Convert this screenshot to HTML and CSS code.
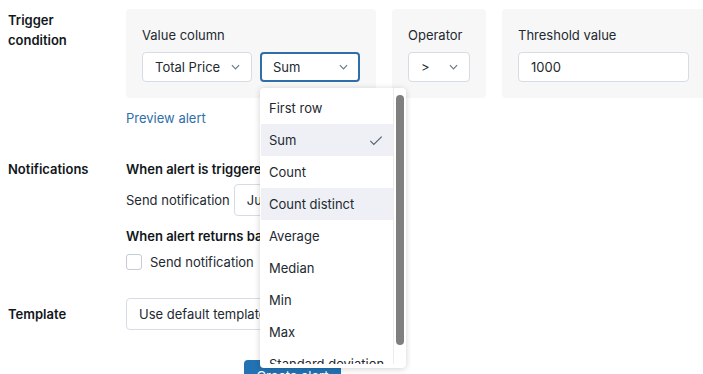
FILE: index.html
```html
<!DOCTYPE html>
<html>
<head>
<meta charset="utf-8">
<link rel="stylesheet" href="styles.css">
</head>
<body>
<div class="page">
  <div class="row row-trigger">
    <div class="label">Trigger condition</div>
    <div class="content">
      <div class="cards">
        <div class="card card-value">
          <div class="field-label">Value column</div>
          <div class="select-group">
            <div class="select w-total"><span>Total Price</span><svg class="chev" viewBox="0 0 10 6"><polyline points="1,1 5,5 9,1"/></svg></div>
            <div class="select w-sum focused"><span>Sum</span><svg class="chev" viewBox="0 0 10 6"><polyline points="1,1 5,5 9,1"/></svg></div>
          </div>
        </div>
        <div class="card card-op">
          <div class="field-label">Operator</div>
          <div class="select w-op"><span>&gt;</span><svg class="chev" viewBox="0 0 10 6"><polyline points="1,1 5,5 9,1"/></svg></div>
        </div>
        <div class="card card-threshold">
          <div class="field-label">Threshold value</div>
          <div class="input w-threshold">1000</div>
        </div>
      </div>
      <a class="link">Preview alert</a>
    </div>
  </div>

  <div class="row row-notify">
    <div class="label">Notifications</div>
    <div class="content">
      <div class="subhead">When alert is triggered</div>
      <div class="inline">
        <span>Send notification</span>
        <div class="select w-once"><span>Just once</span><svg class="chev" viewBox="0 0 10 6"><polyline points="1,1 5,5 9,1"/></svg></div>
      </div>
      <div class="subhead second">When alert returns back to normal</div>
      <label class="check"><span class="box"></span><span>Send notification</span></label>
    </div>
  </div>

  <div class="row row-template">
    <div class="label">Template</div>
    <div class="content">
      <div class="select w-template"><span>Use default template</span><svg class="chev" viewBox="0 0 10 6"><polyline points="1,1 5,5 9,1"/></svg></div>
    </div>
  </div>

  <div class="actions">
    <button class="primary">Create alert</button>
  </div>

  <div class="dropdown">
    <ul class="options">
      <li>First row</li>
      <li class="hl">Sum<svg class="check-icon" viewBox="0 0 16 12"><polyline points="1.5,6.5 5.5,10.5 14.5,1.5"/></svg></li>
      <li>Count</li>
      <li class="hl">Count distinct</li>
      <li>Average</li>
      <li>Median</li>
      <li>Min</li>
      <li>Max</li>
      <li>Standard deviation</li>
    </ul>
    <div class="track"><div class="thumb"></div></div>
  </div>
</div>
</body>
</html>
```

FILE: styles.css
```css
html, body {
  margin: 0;
  padding: 0;
  background: #ffffff;
  overflow: hidden;
}
body {
  font-family: Inter, "Noto Sans", "Liberation Sans", sans-serif;
  font-size: 13px;
  line-height: 20px;
  color: #22292f;
  width: 703px;
  height: 374px;
}
.page {
  position: relative;
  padding: 9px 0 0 8px;
  height: 374px;
  box-sizing: border-box;
}
.row {
  display: flex;
}
.label {
  width: 94px;
  flex: none;
  margin-right: 24px;
  font-weight: 600;
  color: #11171c;
}
.row-trigger .label {
  padding-top: 1px;
}
.content {
  display: flex;
  flex-direction: column;
  align-items: flex-start;
}
.cards {
  display: flex;
  gap: 16px;
}
.card {
  background: #f8f7f7;
  border-radius: 4px;
  padding: 16px;
  display: flex;
  flex-direction: column;
  gap: 7px;
}
.card-threshold {
  width: 171px;
}
.select-group {
  display: flex;
  gap: 8px;
}
.select, .input {
  box-sizing: border-box;
  height: 30px;
  border: 1px solid #d5dce3;
  border-radius: 4px;
  background: #ffffff;
  display: flex;
  align-items: center;
  justify-content: space-between;
  padding: 0 11px 0 12px;
}
.select.focused {
  border: 2px solid #2f6ea9;
  padding: 0 10px 0 11px;
}
.chev {
  width: 9px;
  height: 6px;
  fill: none;
  stroke: #6b7a87;
  stroke-width: 1.3;
}
.w-total { width: 110px; }
.w-sum { width: 100px; }
.w-op { width: 62px; }
.w-threshold { width: 171px; }
.w-once { width: 140px; height: 32px; }
.w-template { width: 180px; height: 32px; }
.link {
  margin-top: 10px;
  color: #2f6ea9;
  text-decoration: none;
}
.row-notify {
  margin-top: 31px;
}
.subhead {
  font-weight: 600;
  color: #11171c;
}
.subhead.second {
  margin-top: 10px;
}
.inline {
  display: flex;
  align-items: center;
  gap: 4px;
  margin-top: 5px;
}
.check {
  display: flex;
  align-items: center;
  gap: 8px;
  margin-top: 6px;
}
.box {
  width: 14px;
  height: 14px;
  border: 1px solid #c3cbd3;
  border-radius: 3px;
  background: #fff;
}
.row-template {
  margin-top: 26px;
}
.row-template .label {
  padding-top: 6px;
}
.actions {
  margin-top: 30px;
  padding-left: 236px;
}
.primary {
  font: inherit;
  width: 97px;
  height: 32px;
  border: none;
  border-radius: 4px;
  background: #2272b4;
  color: #ffffff;
  padding: 0;
  line-height: 32px;
}
.dropdown {
  position: absolute;
  left: 260px;
  top: 88px;
  width: 146px;
  height: 280px;
  padding-bottom: 4px;
  box-sizing: border-box;
  background: #ffffff;
  border-radius: 4px;
  box-shadow: 0 1px 6px rgba(0, 0, 0, 0.18);
  display: flex;
  z-index: 10;
}
.options {
  list-style: none;
  margin: 0;
  padding: 4px 0 0 1px;
  flex: 1;
  overflow: hidden;
}
.options li {
  height: 32px;
  display: flex;
  align-items: center;
  justify-content: space-between;
  padding: 0 10px 0 8px;
  white-space: nowrap;
}
.options li.hl {
  background: #eef0f6;
}
.check-icon {
  width: 14px;
  height: 11px;
  fill: none;
  stroke: #5a6570;
  stroke-width: 1.4;
}
.track {
  width: 13px;
  flex: none;
  border-left: 1px solid #ececec;
  padding: 7px 0 0 2px;
  box-sizing: border-box;
}
.thumb {
  width: 8px;
  height: 250px;
  border-radius: 4px;
  background: #7f7f7f;
}
```
